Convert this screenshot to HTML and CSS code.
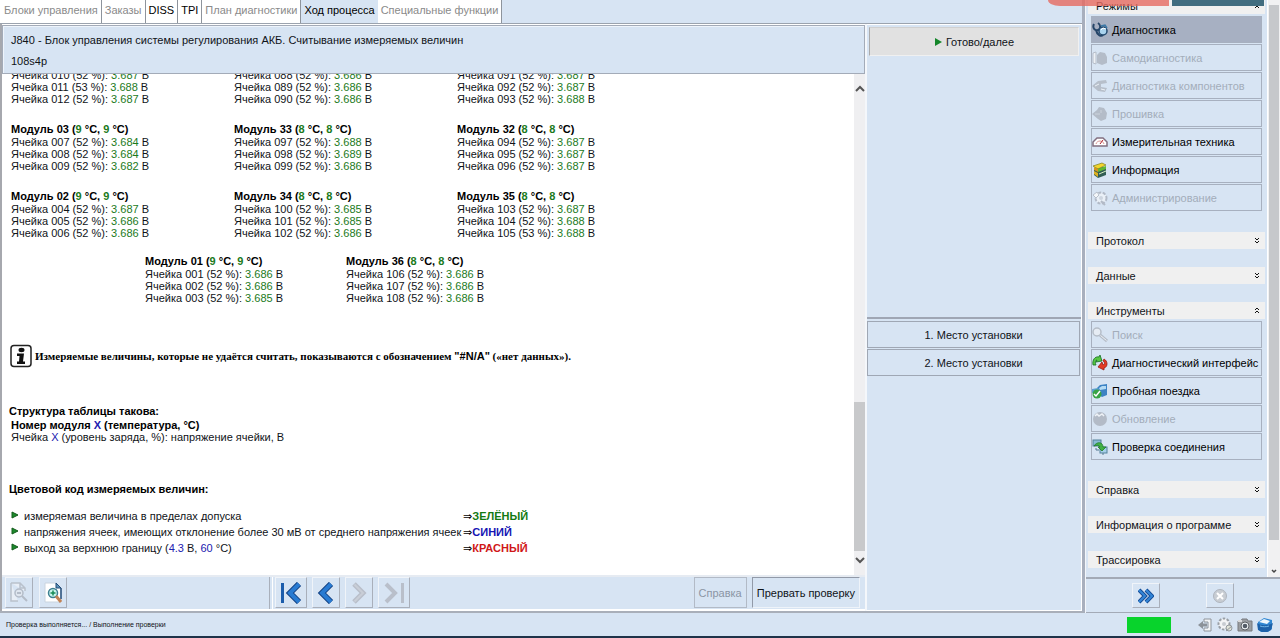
FILE: index.html
```html
<!DOCTYPE html>
<html lang="ru">
<head>
<meta charset="utf-8">
<title>Выполнение проверки</title>
<link rel="stylesheet" href="styles.css">
</head>
<body>
<div class="app">
  <div class="workspace">
    <main class="main">
      <nav class="tabs">
        <button class="tab muted">Блоки управления</button>
        <button class="tab muted">Заказы</button>
        <button class="tab">DISS</button>
        <button class="tab">TPI</button>
        <button class="tab muted">План диагностики</button>
        <button class="tab active">Ход процесса</button>
        <button class="tab muted">Специальные функции</button>
      </nav>
      <div class="panels">
        <section class="process">
          <header class="process-head">
            <h1>J840 - Блок управления системы регулирования АКБ. Считывание измеряемых величин</h1>
            <p>108s4p</p>
          </header>
          <div class="viewport">
            <div class="report">
              <div class="modules">
                <ul class="module">
                  <li>Ячейка 010 (52 %): <b>3.687</b> В</li>
                  <li>Ячейка 011 (53 %): <b>3.688</b> В</li>
                  <li>Ячейка 012 (52 %): <b>3.687</b> В</li>
                </ul>
                <ul class="module">
                  <li>Ячейка 088 (52 %): <b>3.686</b> В</li>
                  <li>Ячейка 089 (52 %): <b>3.686</b> В</li>
                  <li>Ячейка 090 (52 %): <b>3.686</b> В</li>
                </ul>
                <ul class="module">
                  <li>Ячейка 091 (52 %): <b>3.687</b> В</li>
                  <li>Ячейка 092 (52 %): <b>3.687</b> В</li>
                  <li>Ячейка 093 (52 %): <b>3.688</b> В</li>
                </ul>
              </div>
              <div class="modules">
                <ul class="module">
                  <li class="name">Модуль 03 (<b>9</b> °C, <b>9</b> °C)</li>
                  <li>Ячейка 007 (52 %): <b>3.684</b> В</li>
                  <li>Ячейка 008 (52 %): <b>3.684</b> В</li>
                  <li>Ячейка 009 (52 %): <b>3.682</b> В</li>
                </ul>
                <ul class="module">
                  <li class="name">Модуль 33 (<b>8</b> °C, <b>8</b> °C)</li>
                  <li>Ячейка 097 (52 %): <b>3.688</b> В</li>
                  <li>Ячейка 098 (52 %): <b>3.689</b> В</li>
                  <li>Ячейка 099 (52 %): <b>3.686</b> В</li>
                </ul>
                <ul class="module">
                  <li class="name">Модуль 32 (<b>8</b> °C, <b>8</b> °C)</li>
                  <li>Ячейка 094 (52 %): <b>3.687</b> В</li>
                  <li>Ячейка 095 (52 %): <b>3.687</b> В</li>
                  <li>Ячейка 096 (52 %): <b>3.687</b> В</li>
                </ul>
              </div>
              <div class="modules">
                <ul class="module">
                  <li class="name">Модуль 02 (<b>9</b> °C, <b>9</b> °C)</li>
                  <li>Ячейка 004 (52 %): <b>3.687</b> В</li>
                  <li>Ячейка 005 (52 %): <b>3.686</b> В</li>
                  <li>Ячейка 006 (52 %): <b>3.686</b> В</li>
                </ul>
                <ul class="module">
                  <li class="name">Модуль 34 (<b>8</b> °C, <b>8</b> °C)</li>
                  <li>Ячейка 100 (52 %): <b>3.685</b> В</li>
                  <li>Ячейка 101 (52 %): <b>3.685</b> В</li>
                  <li>Ячейка 102 (52 %): <b>3.686</b> В</li>
                </ul>
                <ul class="module">
                  <li class="name">Модуль 35 (<b>8</b> °C, <b>8</b> °C)</li>
                  <li>Ячейка 103 (52 %): <b>3.687</b> В</li>
                  <li>Ячейка 104 (52 %): <b>3.688</b> В</li>
                  <li>Ячейка 105 (53 %): <b>3.688</b> В</li>
                </ul>
              </div>
              <div class="modules pair">
                <ul class="module">
                  <li class="name">Модуль 01 (<b>9</b> °C, <b>9</b> °C)</li>
                  <li>Ячейка 001 (52 %): <b>3.686</b> В</li>
                  <li>Ячейка 002 (52 %): <b>3.686</b> В</li>
                  <li>Ячейка 003 (52 %): <b>3.685</b> В</li>
                </ul>
                <ul class="module">
                  <li class="name">Модуль 36 (<b>8</b> °C, <b>8</b> °C)</li>
                  <li>Ячейка 106 (52 %): <b>3.686</b> В</li>
                  <li>Ячейка 107 (52 %): <b>3.686</b> В</li>
                  <li>Ячейка 108 (52 %): <b>3.686</b> В</li>
                </ul>
              </div>
              <p class="notice">
                <svg width="22" height="24" viewBox="0 0 22 24"><rect x="1" y="1.500" width="20" height="21" rx="3" fill="#fff" stroke="#222" stroke-width="1.500"/><ellipse cx="11.500" cy="6" rx="3" ry="2.200" fill="#111"/><path d="M7 9.500h7l-1 8h2V20H7v-2.500h2L9.500 12H7z" fill="#111"/></svg>
                <span>Измеряемые величины, которые не удаётся считать, показываются с обозначением <b>"#N/A"</b> («нет данных»).</span>
              </p>
              <h2>Структура таблицы такова:</h2>
              <p class="sample strong">Номер модуля <i>X</i> (температура, °C)</p>
              <p class="sample">Ячейка <i>X</i> (уровень заряда, %): напряжение ячейки, В</p>
              <h2 class="codes-title">Цветовой код измеряемых величин:</h2>
              <table class="codes">
                <tr><td class="mark"><svg width="8" height="10" viewBox="0 0 8 10"><path d="M1 1l6 3L1 7z" fill="#1c8a2c" stroke="#145c1c"/></svg></td><td>измеряемая величина в пределах допуска</td><td class="arrow">⇒</td><td class="green">ЗЕЛЁНЫЙ</td></tr>
                <tr><td class="mark"><svg width="8" height="10" viewBox="0 0 8 10"><path d="M1 1l6 3L1 7z" fill="#1c8a2c" stroke="#145c1c"/></svg></td><td>напряжения ячеек, имеющих отклонение более 30 мВ от среднего напряжения ячеек</td><td class="arrow">⇒</td><td class="blue">СИНИЙ</td></tr>
                <tr><td class="mark"><svg width="8" height="10" viewBox="0 0 8 10"><path d="M1 1l6 3L1 7z" fill="#1c8a2c" stroke="#145c1c"/></svg></td><td>выход за верхнюю границу (<i>4.3</i> В, <i>60</i> °C)</td><td class="arrow">⇒</td><td class="red">КРАСНЫЙ</td></tr>
              </table>
            </div>
            <div class="scrollbar">
              <svg width="10" height="10" viewBox="0 0 10 10"><path d="M1 7l4-4 4 4" fill="none" stroke="#555" stroke-width="2"/></svg>
              <div class="track"><div class="thumb"></div></div>
              <svg width="10" height="10" viewBox="0 0 10 10"><path d="M1 3l4 4 4-4" fill="none" stroke="#555" stroke-width="2"/></svg>
            </div>
          </div>
          <footer class="toolbar">
            <div class="zoom-tools">
              <button class="tool" aria-label="Уменьшить" disabled><svg width="22" height="24" viewBox="0 0 22 24"><path d="M3 2h9l5 5v3M3 2v18h7M12 2v5h5" fill="#e8eef6" stroke="#b9c1cc" stroke-width="1.500"/><circle cx="11" cy="12" r="4" fill="#dfe6ef" stroke="#b4bcc8" stroke-width="1.500"/><path d="M9 12h4M14 15l5 5" stroke="#b4bcc8" stroke-width="2"/></svg></button>
              <button class="tool" aria-label="Увеличить"><svg width="22" height="24" viewBox="0 0 22 24"><path d="M3 2h11l5 5v14H3z" fill="#fff" stroke="#c9d4df"/><path d="M14 2v5h5z" fill="#5f93b8" stroke="#234c78"/><path d="M19 7v11" stroke="#234c78" stroke-width="1.500"/><circle cx="11" cy="12" r="4.500" fill="#c9f4ec" stroke="#3d7f91" stroke-width="1.500"/><path d="M8.500 12h5M11 9.500v5" stroke="#168a55" stroke-width="1.500"/><path d="M14 15l5 6" stroke="#c28355" stroke-width="3"/></svg></button>
            </div>
            <div class="step-tools">
              <button class="tool wide" aria-label="В начало"><svg width="22" height="22" viewBox="0 0 22 22"><path d="M2.500 1v20" stroke="#1b5cab" stroke-width="3"/><path d="M19 2l-9 9 9 9" fill="none" stroke="#123f80" stroke-width="6"/><path d="M19 2l-9 9 9 9" fill="none" stroke="#297bd2" stroke-width="4"/></svg></button>
              <button class="tool" aria-label="Назад"><svg width="18" height="22" viewBox="0 0 18 22"><path d="M14 2l-9 9 9 9" fill="none" stroke="#123f80" stroke-width="6"/><path d="M14 2l-9 9 9 9" fill="none" stroke="#297bd2" stroke-width="4"/></svg></button>
              <button class="tool" aria-label="Вперёд" disabled><svg width="18" height="22" viewBox="0 0 18 22"><path d="M4 2l9 9-9 9" fill="none" stroke="#b9bfca" stroke-width="5"/><path d="M4.500 2.500L13 11l-8.500 8.500" fill="none" stroke="#c9ced7" stroke-width="2"/></svg></button>
              <button class="tool wide" aria-label="В конец" disabled><svg width="22" height="22" viewBox="0 0 22 22"><path d="M3 2l9 9-9 9" fill="none" stroke="#b9bfca" stroke-width="4"/><path d="M19.500 1v20" stroke="#b9bfca" stroke-width="3"/></svg></button>
              <button class="command" disabled>Справка</button>
              <button class="command abort">Прервать проверку</button>
            </div>
          </footer>
        </section>
        <section class="actions">
          <div class="action-list">
            <button class="ready"><svg width="8" height="8" viewBox="0 0 8 8"><path d="M1 0l7 4-7 4z" fill="#14862a"/></svg>Готово/далее</button>
          </div>
          <div class="action-list places">
            <button class="place">1. Место установки</button>
            <button class="place">2. Место установки</button>
          </div>
        </section>
      </div>
    </main>
    <aside class="sidebar">
      <div class="side-scroll">
        <div class="groups">
          <section>
            <button class="group-head">Режимы <svg width="6" height="8" viewBox="0 0 6 8"><path d="M1 3l2-2 2 2M1 6l2-2 2 2" fill="none" stroke="#111"/></svg></button>
            <div class="items">
              <button class="item selected"><svg width="16" height="16" viewBox="0 0 16 16"><path d="M2 2C0 6 3 9 6 8S9 3 6 1M4 8c1 5 5 7 7 5" fill="none" stroke="#264568" stroke-width="2"/><circle cx="11" cy="9" r="4" fill="#a9d3ee" stroke="#23496e" stroke-width="1.500"/><path d="M9 8l2-2 3 1" fill="none" stroke="#fff"/><path d="M9 4l4-1 2 3" fill="none" stroke="#3a79a8" stroke-width="1.500"/></svg>Диагностика</button>
              <button class="item" disabled><svg width="16" height="16" viewBox="0 0 16 16"><path d="M1 3l3-1v12l-3-1z" fill="#edf1f6" stroke="#b5bdc9"/><path d="M5 5l3-3 5 1 2 4v6l-5 2-5-2z" fill="#b4bcc8"/></svg>Самодиагностика</button>
              <button class="item" disabled><svg width="16" height="16" viewBox="0 0 16 16"><path d="M0 8l6-5 8-1 1 3-6 1v3l6 1-2 4-7-1z" fill="#b7bfca"/><path d="M3 8l4-2M9 11l4 1" stroke="#edf2f8"/></svg>Диагностика компонентов</button>
              <button class="item" disabled><svg width="16" height="16" viewBox="0 0 16 16"><path d="M0 8l5-4 2-3 5 1 3 5-1 6-5 2-3-2z" fill="#b4bcc8"/><path d="M3 8h5M9 4v3" stroke="#cbd2dc"/></svg>Прошивка</button>
              <button class="item"><svg width="16" height="16" viewBox="0 0 16 16"><path d="M1 12V8l4-4h6l4 4v4z" fill="#fff" stroke="#826f80" stroke-width="1.500"/><path d="M4 10c1-4 7-4 8 0" fill="none" stroke="#d8938f"/><path d="M8 10l3-4" stroke="#b3232a"/></svg>Измерительная техника</button>
              <button class="item"><svg width="16" height="16" viewBox="0 0 16 16"><path d="M2 7l9-2 3 2v6l-8 3-4-3z" fill="#315d55"/><path d="M1 4l9-3 4 2-8 4z" fill="#f3d52c" stroke="#7b7d20" stroke-width=".7"/><path d="M2 5l4 2v3L2 8z" fill="#d4961c"/><path d="M6 7l8-3v3l-8 3z" fill="#5fb832"/><path d="M2 9l4 2v4l-4-3z" fill="#ddb021"/><path d="M7 12l7-3" stroke="#d6ecc0"/></svg>Информация</button>
              <button class="item" disabled><svg width="16" height="16" viewBox="0 0 16 16"><circle cx="9" cy="8" r="5.500" fill="#eaf0f7" stroke="#b2bac7" stroke-width="2" stroke-dasharray="3 1.500"/><circle cx="9" cy="8" r="2" fill="#cdd5df"/><path d="M1 5l4-3 2 3-3 3z" fill="#f4f7fa" stroke="#b8c0cb"/><path d="M9 11l4 4" stroke="#b2bac7" stroke-width="2"/></svg>Администрирование</button>
            </div>
          </section>
          <section><button class="group-head">Протокол <svg width="6" height="8" viewBox="0 0 6 8"><path d="M1 1l2 2 2-2M1 4l2 2 2-2" fill="none" stroke="#111"/></svg></button></section>
          <section><button class="group-head">Данные <svg width="6" height="8" viewBox="0 0 6 8"><path d="M1 1l2 2 2-2M1 4l2 2 2-2" fill="none" stroke="#111"/></svg></button></section>
          <section>
            <button class="group-head">Инструменты <svg width="6" height="8" viewBox="0 0 6 8"><path d="M1 3l2-2 2 2M1 6l2-2 2 2" fill="none" stroke="#111"/></svg></button>
            <div class="items">
              <button class="item" disabled><svg width="16" height="16" viewBox="0 0 16 16"><circle cx="5" cy="5" r="4" fill="#e6ecf4" stroke="#b5bdc8" stroke-width="1.500"/><path d="M8 8l7 6" stroke="#b5bdc8" stroke-width="3"/><path d="M8.500 8.500l6 5" stroke="#edf1f6"/></svg>Поиск</button>
              <button class="item"><svg width="16" height="16" viewBox="0 0 16 16"><path d="M1 10C0 5 3 1 7 2l1-2 2 6-6 1 1-2C3 5 3 8 4 10z" fill="#58c742" stroke="#156c22" stroke-width=".8"/><path d="M12 4c4 2 4 8 0 9v2l-6-3 4-5 1 3c2-1 2-3 0-4z" fill="#e33b24" stroke="#941c14" stroke-width=".8"/></svg>Диагностический интерфейс</button>
              <button class="item"><svg width="16" height="16" viewBox="0 0 16 16"><path d="M5 5l3-3 7-1v11l-5 2-5-3z" fill="#3d83c4"/><path d="M7 5l3-2 4 0v3l-6 1z" fill="#b4dbf4"/><path d="M0 6l6-1 2 3-8 2z" fill="#5d9fd1"/><circle cx="5" cy="11" r="4.500" fill="#38a445"/><path d="M2 11l2 2 4-5" fill="none" stroke="#fff" stroke-width="1.500"/></svg>Пробная поездка</button>
              <button class="item" disabled><svg width="16" height="16" viewBox="0 0 16 16"><circle cx="8" cy="8" r="7" fill="#b3bbc7"/><path d="M3 5l2-2 2 2 3-2 2 2" fill="none" stroke="#eef2f7" stroke-width="1.500"/></svg>Обновление</button>
              <button class="item"><svg width="16" height="16" viewBox="0 0 16 16"><rect x="1" y="1" width="8" height="6" fill="#8abbd5" stroke="#54819b"/><rect x="8" y="8" width="7" height="6" fill="#a5d0e9" stroke="#54819b"/><path d="M2 7c3-5 9-4 9 1h3l-4 4-4-4h2c-1-2-3-2-6-1z" fill="#42b144" stroke="#217b2b" stroke-width=".8"/><path d="M4 9v2h3M11 14v2" fill="none" stroke="#547b91"/></svg>Проверка соединения</button>
            </div>
          </section>
          <section><button class="group-head">Справка <svg width="6" height="8" viewBox="0 0 6 8"><path d="M1 1l2 2 2-2M1 4l2 2 2-2" fill="none" stroke="#111"/></svg></button></section>
          <section><button class="group-head">Информация о программе <svg width="6" height="8" viewBox="0 0 6 8"><path d="M1 1l2 2 2-2M1 4l2 2 2-2" fill="none" stroke="#111"/></svg></button></section>
          <section><button class="group-head">Трассировка <svg width="6" height="8" viewBox="0 0 6 8"><path d="M1 1l2 2 2-2M1 4l2 2 2-2" fill="none" stroke="#111"/></svg></button></section>
        </div>
        <div class="side-bar">
          <div class="side-thumb"></div>
          <svg width="6" height="6" viewBox="0 0 6 6"><path d="M1 2l2 2 2-2" fill="none" stroke="#444" stroke-width="1.500"/></svg>
        </div>
      </div>
      <div class="side-foot">
        <button class="tool" aria-label="Далее"><svg width="16" height="16" viewBox="0 0 16 16"><path d="M1 2l6 6-6 6M8 2l6 6-6 6" fill="none" stroke="#164d96" stroke-width="4"/><path d="M1 2l6 6-6 6M8 2l6 6-6 6" fill="none" stroke="#3386d8" stroke-width="2"/></svg></button>
        <button class="tool" aria-label="Отмена" disabled><svg width="16" height="16" viewBox="0 0 16 16"><circle cx="8" cy="8" r="6.500" fill="#c8cdd3" stroke="#afb5be"/><path d="M5 5l6 6M11 5l-6 6" stroke="#fff" stroke-width="2"/></svg></button>
      </div>
    </aside>
  </div>
  <footer class="status">
    <span class="status-text">Проверка выполняется... / Выполнение проверки</span>
    <div class="status-tools">
      <span class="lamp"></span>
      <svg width="16" height="16" viewBox="0 0 16 16"><path d="M7 2h7v12H7v-3h4V5H7z" fill="#f2f4f6" stroke="#8e949b"/><path d="M1 8l5-4v2.500h4v3H6V12z" fill="#8c9299"/></svg>
      <svg width="16" height="16" viewBox="0 0 16 16"><circle cx="7" cy="7" r="5.500" fill="#f3f4f5" stroke="#999fa6" stroke-width="2" stroke-dasharray="2.500 1.500"/><circle cx="7" cy="7" r="2" fill="#c8ccd1"/><circle cx="12" cy="11" r="3" fill="#e1e3d8" stroke="#92989d"/><path d="M9 14l6-5" stroke="#8e949a"/></svg>
      <svg width="16" height="16" viewBox="0 0 16 16"><path d="M1 4h3l1-2h5l1 2h4v10H1z" fill="#9b9ea2" stroke="#77797d"/><circle cx="8" cy="9" r="4" fill="#eff3f6" stroke="#5e6266"/><circle cx="8" cy="9" r="2.300" fill="#545c66"/><path d="M1 4h4" stroke="#d9dadc" stroke-width="2"/></svg>
      <svg width="16" height="16" viewBox="0 0 16 16"><path d="M1 5l6-4 8 2v9l-4 3H4l-3-3z" fill="#2f86d2"/><path d="M2 5l5-3 6 2-3 3z" fill="#eef7fd"/><path d="M0 6c4 3 11 3 16 0l-2 7-4 2H5l-4-2z" fill="#1d61a9"/><path d="M3 9c3 1 6 1 9 0" fill="none" stroke="#73b7e8"/></svg>
    </div>
  </footer>
  <div class="window-edge"><span class="edge-red"></span><span class="edge-teal"></span></div>
</div>
</body>
</html>
```
FILE: styles.css
```css
* { box-sizing: border-box; }
body {
  margin: 0;
  font: 11px/14px "Liberation Sans", Arial, sans-serif;
  color: #101318;
  background: #d7e4f3;
}
button {
  font: inherit;
  color: inherit;
  margin: 0;
  padding: 0;
  border: 0;
  background: none;
  white-space: nowrap;
}
button:disabled { color: #a3adba; }
h1, h2, p, ul { margin: 0; padding: 0; font: inherit; }
ul { list-style: none; }
svg { display: block; flex: none; }

.app { position: relative; display: flex; flex-direction: column; height: 100vh; overflow: hidden; }
.workspace { flex: 1; min-height: 0; display: flex; }
.main {
  flex: 1;
  min-width: 0;
  display: flex;
  flex-direction: column;
  border-right: 3px solid #a8afbd;
  border-bottom: 2px solid #a9afb9;
}

.tabs { display: flex; height: 24px; padding-left: 1px; border-bottom: 1px solid #9ba3ae; background: linear-gradient(90deg, #fff 2px, transparent 2px); }
.tab { padding: 0 3px 3px; background: #fff; border-right: 1px solid #8e949c; color: #000; }
.tab.muted { color: #8a8a8a; }
.tab.active { background: #d7e4f3; border-right: 0; }

.panels { flex: 1; min-height: 0; display: flex; border-left: 2px solid #a6a8ae; }
.process { flex: 1; min-width: 0; display: flex; flex-direction: column; border-top: 1px solid #fff; }
.process-head {
  height: 49px;
  padding: 7px 8px;
  border: 1px solid #a3abb8;
  box-shadow: inset 1px 1px #eef4fb;
  display: flex;
  flex-direction: column;
  gap: 7px;
}
.viewport { flex: 1; min-height: 0; display: flex; background: #fff; }
.report {
  flex: 1;
  min-width: 0;
  padding: 0 7px 19px;
  display: flex;
  flex-direction: column;
  justify-content: flex-end;
  overflow: hidden;
}
.report > * { flex: none; }
.modules { display: grid; grid-template-columns: repeat(3, 223px); margin: 0 2px 18px; line-height: 12px; }
.modules:nth-child(3) { margin-bottom: 16px; }
.modules.pair { grid-template-columns: repeat(2, 201px); margin: 0 136px 40px; }
.module b { font-weight: inherit; color: #1b7a1b; }
.module .name { font-weight: bold; line-height: 13px; color: #000; }
.notice { display: flex; align-items: center; gap: 3px; margin: 0 1px 36px; font: bold 11px/14px "Liberation Serif", "Times New Roman", serif; color: #000; }
.notice b { font-family: "Liberation Sans", Arial, sans-serif; }
.report h2 { font-weight: bold; color: #000; margin-bottom: 1px; }
.sample { padding-left: 2px; line-height: 12px; }
.strong { font-weight: bold; color: #000; }
.report i { font-style: normal; color: #2020b0; }
.report .codes-title { margin: 39px 0 12px; }
.codes { align-self: flex-start; border-collapse: collapse; line-height: 16px; }
.codes td { padding: 0; }
.codes .mark { width: 15px; padding-left: 2px; }
.codes .arrow { padding-left: 2px; color: #000; }
.green, .blue, .red { font-weight: bold; }
.green { color: #127a12; }
.blue { color: #1414b4; }
.red { color: #d01818; }

.scrollbar { width: 11px; padding: 10px 0; display: flex; flex-direction: column; align-items: center; gap: 4px; background: #efeff1; }
.track { flex: 1; width: 100%; display: flex; flex-direction: column; justify-content: flex-end; }
.thumb { height: 33%; background: #c8c9cb; }

.toolbar { height: 36px; display: flex; gap: 2px; border-top: 2px solid #e6ebf2; border-bottom: 2px solid #fff; }
.zoom-tools { flex: 0 0 31%; display: flex; gap: 6px; padding: 0 3px 1px; border-right: 1px solid #a9b0bb; }
.step-tools { flex: 1; display: flex; gap: 5px; padding: 0 5px 1px 2px; border-left: 1px solid #fff; }
.tool {
  width: 28px;
  display: flex;
  align-items: center;
  justify-content: center;
  border: 1px solid #f0f4f9;
  border-right-color: #a9afba;
  border-bottom-color: #a9afba;
}
.tool.wide { width: 32px; }
.command { padding: 0 4px; border: 1px solid #b2bac6; }
.command:disabled { color: #8b95a4; margin-left: auto; }
.abort { border-color: #929aa8 #eef3f9 #eef3f9 #929aa8; }

.actions { flex: 0 0 217px; display: grid; grid-template-rows: 1fr 1fr; border-left: 2px solid #f4f7fb; border-right: 1px solid #fff; border-bottom: 1px solid #fff; box-shadow: inset 0 1px #fff; }
.action-list { padding: 3px 2px 2px; display: flex; flex-direction: column; gap: 1px; }
.places { border-top: 2px solid #9fa6b4; padding: 2px 1px 2px 0; }
.ready { height: 29px; display: flex; align-items: center; justify-content: center; gap: 4px; background: #e1e1e1; border: 1px solid #f0f0f0; border-left-color: #aaa; border-top-color: #d0d0d0; }
.place { height: 27px; border: 1px solid #9fa7b4; }

.sidebar { flex: 0 0 195px; min-width: 0; display: flex; flex-direction: column; border-left: 1px solid #f3f6fa; }
.side-scroll { flex: 1; min-height: 0; display: flex; overflow: hidden; }
.groups { flex: 1; min-width: 0; display: flex; flex-direction: column; gap: 18px; margin-top: -3px; padding: 0 2px; }
.group-head { width: 100%; height: 17px; padding: 1px 5px 0 8px; display: flex; align-items: center; justify-content: space-between; background: #f0f0f0; }
.items { display: flex; flex-direction: column; gap: 1px; padding: 2px 3px 3px; }
.item { height: 27px; display: flex; align-items: center; gap: 4px; border: 1px solid #a7b0bf; color: #000; }
.item.selected { background: #a7b0c2; }
.side-bar { flex: none; width: 13px; display: flex; flex-direction: column; align-items: center; padding: 5px 0 3px; gap: 28px; background: #f1f1f2; border-left: 1px solid #fff; }
.side-thumb { flex: 1; width: 10px; background: #c6c8cb; }
.side-foot { height: 36px; display: flex; justify-content: center; gap: 46px; padding: 4px 0; border-top: 2px solid #a3aab6; border-bottom: 1px solid #a3aab6; }

.status { height: 25px; display: flex; align-items: center; justify-content: space-between; padding: 0 7px 0 6px; border-bottom: 2px solid #1f3349; }
.status-text { font-size: 7px; line-height: 10px; }
.status-tools { display: flex; align-items: center; gap: 4px; }
.lamp { width: 44px; height: 16px; margin-right: 22px; background: #08d32c; }

.window-edge { position: absolute; top: 0; right: 16px; display: flex; gap: 3px; height: 6px; pointer-events: none; }
.edge-red { width: 121px; background: #e66a60cc; border-bottom-left-radius: 12px 6px; }
.edge-teal { width: 92px; background: #416d80; }
```
